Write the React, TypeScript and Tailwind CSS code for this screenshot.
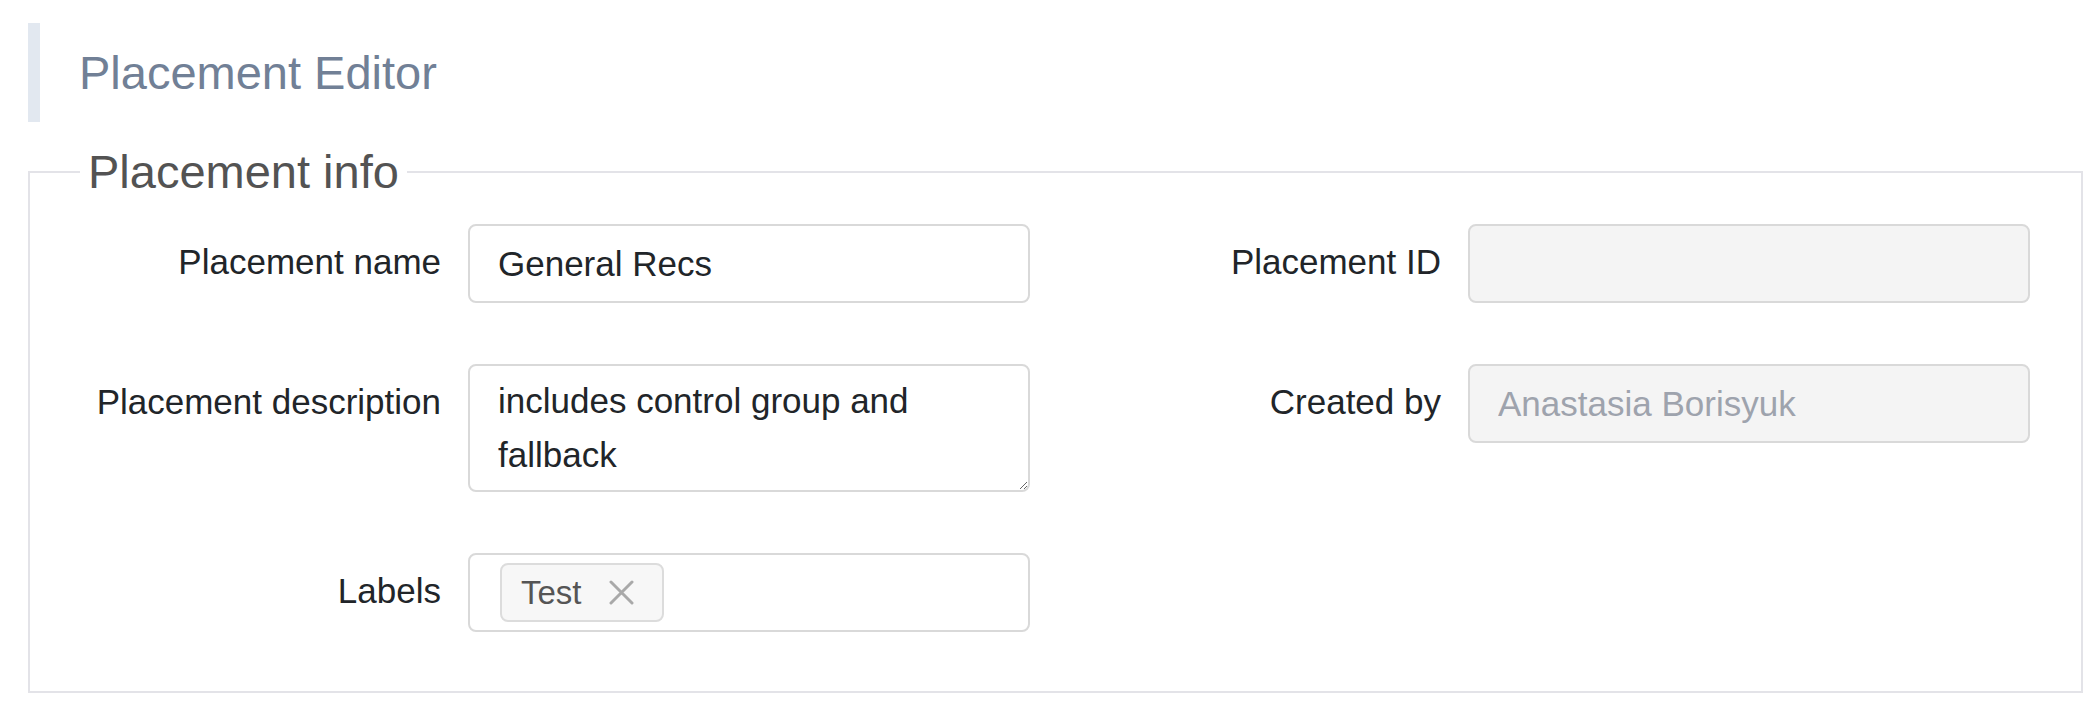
import React from "react"

interface IFieldRow {
    label: string
    children: React.ReactNode
}

function FieldRow(props: IFieldRow) {
    return (
        <div className="flex items-start gap-[27px]">
            <label className="w-[381px] shrink-0 pt-[11px] text-right text-[35px] leading-[54px] text-[#212529]">
                {props.label}
            </label>
            <div className="w-[562px] shrink-0">{props.children}</div>
        </div>
    )
}

const inputBase =
    "block w-full h-[79px] border-2 border-[#d9d9d9] rounded-[8px] pl-[28px] pr-[20px] text-[35px] leading-[54px] outline-none"

function App() {
    return (
        <div className="min-h-[720px] bg-white font-['Liberation_Sans',Arial,sans-serif]">
            <div className="ml-[28px] mt-[23px] flex h-[99px] items-center border-l-[12px] border-[#e2e8f0] pl-[39px]">
                <h1 className="text-[47px] leading-[46px] text-[#718096]">Placement Editor</h1>
            </div>

            <fieldset className="mt-[27px] ml-[28px] w-[2055px] border-2 border-[#e3e3e8] px-0 pb-[59px] pt-[29px]">
                <legend className="ml-[50px] px-[8px] text-[47px] leading-[46px] text-[#535353]">Placement info</legend>

                <div className="grid grid-cols-[1000px_1000px] gap-y-[61px] pl-[30px]">
                    <FieldRow label="Placement name">
                        <input readOnly defaultValue="General Recs" className={inputBase + " bg-white text-[#212529]"} />
                    </FieldRow>
                    <FieldRow label="Placement ID">
                        <input disabled defaultValue="" className={inputBase + " bg-[#f4f4f4]"} />
                    </FieldRow>

                    <FieldRow label="Placement description">
                        <textarea
                            readOnly
                            defaultValue="includes control group and fallback"
                            className="block h-[128px] w-full border-2 border-[#d9d9d9] rounded-[8px] py-[8px] pl-[28px] pr-[20px] text-[35px] leading-[54px] text-[#212529] outline-none"
                        />
                    </FieldRow>
                    <FieldRow label="Created by">
                        <input disabled defaultValue="Anastasia Borisyuk" className={inputBase + " bg-[#f4f4f4] text-[#9ea3ad]"} />
                    </FieldRow>

                    <FieldRow label="Labels">
                        <div className="flex h-[79px] w-full items-center border-2 border-[#d9d9d9] rounded-[8px] pl-[30px]">
                            <span className="flex h-[59px] items-center gap-[27px] border-2 border-[#dcdcdc] rounded-[8px] bg-[#f7f7f7] pl-[19px] pr-[28px]">
                                <span className="text-[33px] leading-[40px] text-[#555555]">Test</span>
                                <svg width="25" height="25" viewBox="0 0 25 25" className="text-[#a9a9a9]">
                                    <path d="M2 2 L23 23 M23 2 L2 23" stroke="currentColor" strokeWidth="3" strokeLinecap="round" />
                                </svg>
                            </span>
                        </div>
                    </FieldRow>
                    <div />
                </div>
            </fieldset>
        </div>
    )
}

export default App
